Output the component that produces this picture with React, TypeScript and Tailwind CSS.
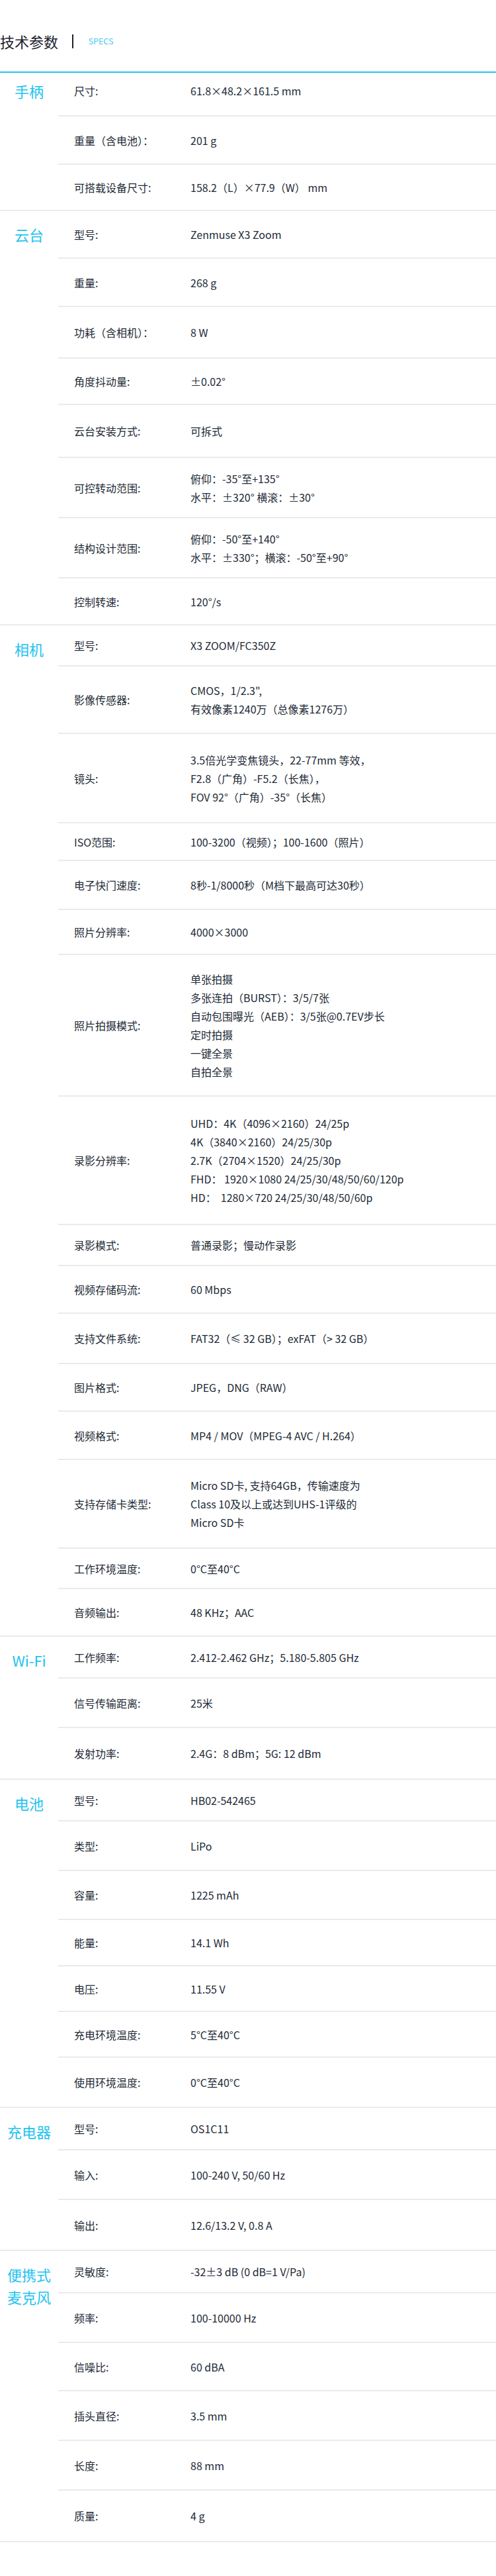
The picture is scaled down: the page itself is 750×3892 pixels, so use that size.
import React from "react";

type Row = { label: string; value: string[]; h: string; cls?: string };
type Section = { name: string[]; pad: string; rows: Row[] };

const sections: Section[] = [
    {
        name: ["手柄"],
        pad: "pt-[10px]",
        rows: [
            { label: "尺寸:", value: ["61.8×48.2×161.5 mm"], h: "h-[66px]", cls: "pb-[10px]" },
            { label: "重量（含电池）：", value: ["201 g"], h: "h-[73px]" },
            { label: "可搭载设备尺寸:", value: ["158.2（L）×77.9（W） mm"], h: "h-[68px]" },
        ],
    },
    {
        name: ["云台"],
        pad: "pt-[18px]",
        rows: [
            { label: "型号:", value: ["Zenmuse X3 Zoom"], h: "h-[72px]" },
            { label: "重量:", value: ["268 g"], h: "h-[73px]" },
            { label: "功耗（含相机）：", value: ["8 W"], h: "h-[78px]" },
            { label: "角度抖动量:", value: ["±0.02°"], h: "h-[70px]" },
            { label: "云台安装方式:", value: ["可拆式"], h: "h-[80px]" },
            { label: "可控转动范围:", value: ["俯仰：-35°至+135°", "水平：±320° 横滚：±30°"], h: "h-[91px]" },
            { label: "结构设计范围:", value: ["俯仰：-50°至+140°", "水平：±330°；横滚：-50°至+90°"], h: "h-[91px]" },
            { label: "控制转速:", value: ["120°/s"], h: "h-[69px]" },
        ],
    },
    {
        name: ["相机"],
        pad: "pt-[18px]",
        rows: [
            { label: "型号:", value: ["X3 ZOOM/FC350Z"], h: "h-[62px]" },
            { label: "影像传感器:", value: ["CMOS，1/2.3\",", "有效像素1240万（总像素1276万）"], h: "h-[102px]" },
            {
                label: "镜头:",
                value: ["3.5倍光学变焦镜头，22-77mm 等效，", "F2.8（广角）-F5.2（长焦），", "FOV 92°（广角）-35°（长焦）"],
                h: "h-[135px]",
            },
            { label: "ISO范围:", value: ["100-3200（视频）；100-1600（照片）"], h: "h-[57px]" },
            { label: "电子快门速度:", value: ["8秒-1/8000秒（M档下最高可达30秒）"], h: "h-[74px]" },
            { label: "照片分辨率:", value: ["4000×3000"], h: "h-[68px]" },
            {
                label: "照片拍摄模式:",
                value: ["单张拍摄", "多张连拍（BURST）：3/5/7张", "自动包围曝光（AEB）：3/5张@0.7EV步长", "定时拍摄", "一键全景", "自拍全景"],
                h: "h-[214px]",
            },
            {
                label: "录影分辨率:",
                value: [
                    "UHD：4K（4096×2160）24/25p",
                    "4K（3840×2160）24/25/30p",
                    "2.7K（2704×1520）24/25/30p",
                    "FHD： 1920×1080 24/25/30/48/50/60/120p",
                    "HD：  1280×720 24/25/30/48/50/60p",
                ],
                h: "h-[194px]",
            },
            { label: "录影模式:", value: ["普通录影；慢动作录影"], h: "h-[62px]" },
            { label: "视频存储码流:", value: ["60 Mbps"], h: "h-[72px]" },
            { label: "支持文件系统:", value: ["FAT32（≤ 32 GB）；exFAT（> 32 GB）"], h: "h-[76px]" },
            { label: "图片格式:", value: ["JPEG，DNG（RAW）"], h: "h-[72px]" },
            { label: "视频格式:", value: ["MP4 / MOV（MPEG-4 AVC / H.264）"], h: "h-[73px]" },
            {
                label: "支持存储卡类型:",
                value: ["Micro SD卡, 支持64GB，传输速度为", "Class 10及以上或达到UHS-1评级的", "Micro SD卡"],
                h: "h-[134px]",
            },
            { label: "工作环境温度:", value: ["0°C至40°C"], h: "h-[61px]" },
            { label: "音频输出:", value: ["48 KHz；AAC"], h: "h-[70px]" },
        ],
    },
    {
        name: ["Wi-Fi"],
        pad: "pt-[18px]",
        rows: [
            { label: "工作频率:", value: ["2.412-2.462 GHz；5.180-5.805 GHz"], h: "h-[63px]" },
            { label: "信号传输距离:", value: ["25米"], h: "h-[75px]" },
            { label: "发射功率:", value: ["2.4G：8 dBm；5G: 12 dBm"], h: "h-[76px]" },
        ],
    },
    {
        name: ["电池"],
        pad: "pt-[18px]",
        rows: [
            { label: "型号:", value: ["HB02-542465"], h: "h-[63px]" },
            { label: "类型:", value: ["LiPo"], h: "h-[75px]" },
            { label: "容量:", value: ["1225 mAh"], h: "h-[74px]" },
            { label: "能量:", value: ["14.1 Wh"], h: "h-[70px]" },
            { label: "电压:", value: ["11.55 V"], h: "h-[69px]" },
            { label: "充电环境温度:", value: ["5°C至40°C"], h: "h-[69px]" },
            { label: "使用环境温度:", value: ["0°C至40°C"], h: "h-[74px]" },
        ],
    },
    {
        name: ["充电器"],
        pad: "pt-[18px]",
        rows: [
            { label: "型号:", value: ["OS1C11"], h: "h-[64px]" },
            { label: "输入:", value: ["100-240 V, 50/60 Hz"], h: "h-[75px]" },
            { label: "输出:", value: ["12.6/13.2 V, 0.8 A"], h: "h-[75px]" },
        ],
    },
    {
        name: ["便携式", "麦克风"],
        pad: "pt-[18px]",
        rows: [
            { label: "灵敏度:", value: ["-32±3 dB (0 dB=1 V/Pa)"], h: "h-[64px]" },
            { label: "频率:", value: ["100-10000 Hz"], h: "h-[75px]" },
            { label: "信噪比:", value: ["60 dBA"], h: "h-[73px]" },
            { label: "插头直径:", value: ["3.5 mm"], h: "h-[75px]" },
            { label: "长度:", value: ["88 mm"], h: "h-[75px]" },
            { label: "质量:", value: ["4 g"], h: "h-[76px]" },
        ],
    },
];

const font = "font-['Noto_Sans_CJK_SC','Noto_Sans',sans-serif]";

const App: React.FC = () => {
    return (
        <div className={`w-[750px] bg-white text-[#222a36] ${font}`}>
            {/* 标题 */}
            <div className="h-[108px] flex items-center pt-[16px]">
                <h2 className="text-[22px] leading-none text-[#1c222d]">技术参数</h2>
                <span className="ml-[21px] w-[2px] h-[21px] bg-[#1c222d]" />
                <span className="ml-[23px] text-[13px] leading-none text-[#4ccbef] font-['Noto_Sans',sans-serif]">SPECS</span>
            </div>
            <div className="h-[2px] bg-[#22c3ef]" />

            {sections.map((s, si) => (
                <div key={si} className="flex border-b-2 border-[#ebebeb]">
                    <div className={`w-[88px] shrink-0 text-center text-[22px] leading-[34px] text-[#22c3ef] ${s.pad}`}>
                        {s.name.map((n) => (
                            <div key={n}>{n}</div>
                        ))}
                    </div>
                    <div className="flex-1">
                        {s.rows.map((r, ri) => (
                            <div
                                key={ri}
                                className={`flex items-center pl-[24px] ${r.h} ${r.cls ?? ""} ${
                                    ri < s.rows.length - 1 ? "border-b-2 border-[#ebebeb]" : ""
                                }`}
                            >
                                <div className="w-[176px] shrink-0 text-[16px] leading-[28px] whitespace-pre">{r.label}</div>
                                <div className="flex-1 text-[16px] leading-[28px]">
                                    {r.value.map((v, vi) => (
                                        <div key={vi} className="whitespace-pre">
                                            {v}
                                        </div>
                                    ))}
                                </div>
                            </div>
                        ))}
                    </div>
                </div>
            ))}

            <div className="h-[51px]" />
        </div>
    );
};

export default App;
